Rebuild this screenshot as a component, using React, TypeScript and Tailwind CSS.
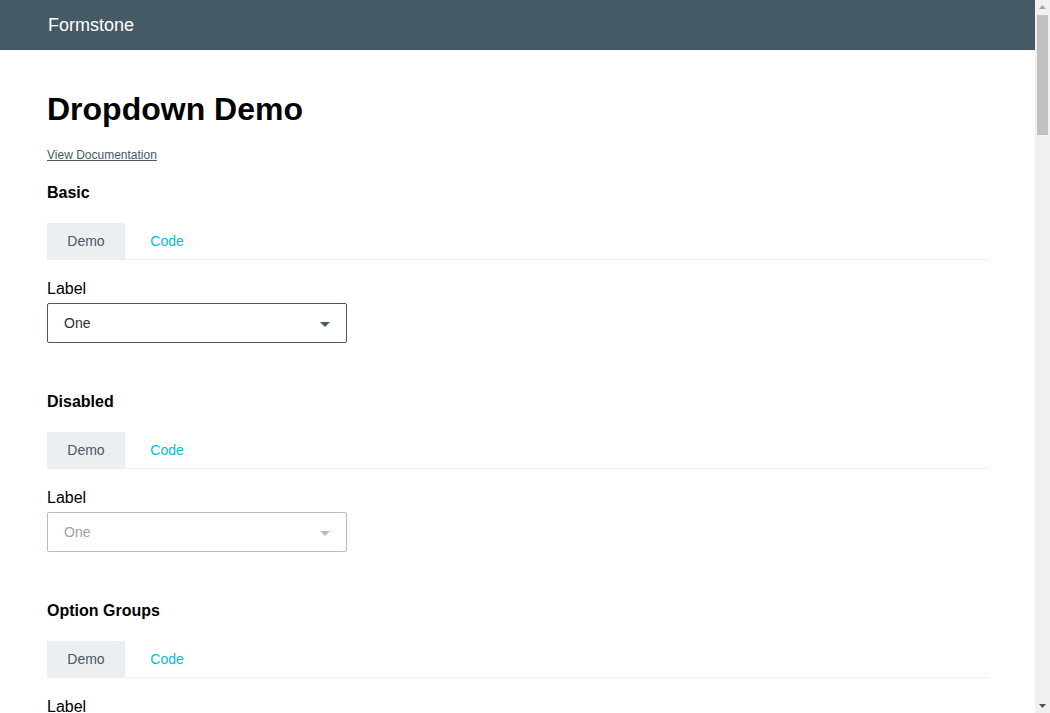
import React from "react";

const Caret = ({ disabled }: { disabled?: boolean }) => (
  <svg width="10" height="5" viewBox="0 0 10 5" className="absolute right-[16px] top-[18px]">
    <path d="M0 0 L10 0 L5 5 Z" fill={disabled ? "#b0bec5" : "#455a64"} />
  </svg>
);

const Section = ({ title, disabled }: { title: string; disabled?: boolean }) => (
  <section className="mb-[46px]">
    <h3 className="pt-px text-[16px] leading-[24px] font-bold text-black">{title}</h3>
    <div className="mt-[18px] flex border-b border-[#eceff1]">
      <div className="w-[78px] h-[36px] flex items-center justify-center bg-[#eceff1] text-[14px] text-[#455a64]">
        Demo
      </div>
      <div className="w-[84px] h-[36px] flex items-center justify-center text-[14px] text-[#00bcd4]">
        Code
      </div>
    </div>
    <label className="block mt-[17px] text-[16px] leading-[24px] text-black">Label</label>
    <div
      className={`relative mt-[2px] w-[300px] h-[40px] rounded-[2px] border flex items-center pl-[16px] pt-px text-[14px] ${
        disabled ? "border-[#b0bec5] text-[#9e9e9e]" : "border-[#455a64] text-[#263238]"
      }`}
    >
      One
      <Caret disabled={disabled} />
    </div>
  </section>
);

// stand-in for the browser's classic scrollbar seen in the screenshot
const Scrollbar = () => (
  <div className="w-[15px] shrink-0 h-full bg-[#f1f1f1] flex flex-col items-center">
    <svg width="15" height="15" viewBox="0 0 15 15" className="shrink-0">
      <path d="M4 9 L11 9 L7.5 5 Z" fill="#a3a3a3" />
    </svg>
    <div className="w-[11px] h-[120px] bg-[#c1c1c1]" />
    <div className="flex-1" />
    <svg width="15" height="15" viewBox="0 0 15 15" className="shrink-0">
      <path d="M4 6 L11 6 L7.5 10 Z" fill="#505050" />
    </svg>
  </div>
);

export default function App() {
  return (
    <div className="h-screen flex overflow-hidden bg-white font-['Liberation_Sans',Arial,sans-serif]">
      <div className="flex-1 min-w-0 h-full overflow-hidden">
        <header className="h-[50px] bg-[#455a64] flex items-center px-[47px]">
          <span className="pl-px text-[18px] text-white leading-none -mt-[1px]">Formstone</span>
        </header>
        <main className="px-[47px] pb-20">
          <h1 className="mt-[39px] text-[32px] leading-[40px] font-bold text-black">Dropdown Demo</h1>
          <a href="#" className="block mt-[18px] text-[12px] leading-[16px] underline text-[#455a64] w-fit">
            View Documentation
          </a>
          <div className="mt-[17px]">
            <Section title="Basic" />
            <Section title="Disabled" disabled />
            <Section title="Option Groups" />
            <Section title="Multiple" />
          </div>
        </main>
      </div>
      <Scrollbar />
    </div>
  );
}
